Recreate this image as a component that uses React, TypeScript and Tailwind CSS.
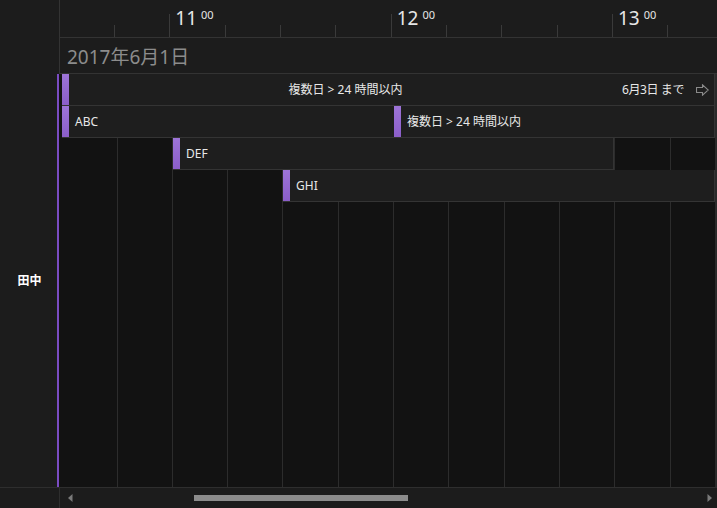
import React from "react";

type Ev = { label: string; left: string; width: string; top: string };

const hours: Record<number, string> = { 2: "11", 6: "12", 10: "13" };

function Strip() {
  return <div className="w-[7px] shrink-0 self-stretch bg-gradient-to-b from-[#9d74d8] to-[#8b5ec9]" />;
}

function ArrowOut() {
  return (
    <svg width="13" height="12" viewBox="0 0 13 12" className="shrink-0">
      <path d="M0.5 3.5H6.5V0.8L12.3 6L6.5 11.2V8.5H0.5Z" fill="none" stroke="#8a8a8a" strokeWidth="1.1" />
    </svg>
  );
}

export default function App() {
  const events: Ev[] = [
    { label: "ABC", left: "left-[1px]", width: "w-[333px]", top: "top-[32px]" },
    { label: "複数日 > 24 時間以内", left: "left-[333px]", width: "right-0", top: "top-[32px]" },
    { label: "DEF", left: "left-[112px]", width: "w-[441px]", top: "top-[64px]" },
    { label: "GHI", left: "left-[222px]", width: "right-0", top: "top-[96px]" },
  ];

  return (
    <div className="w-[717px] h-[508px] overflow-hidden bg-[#1c1c1c] text-[#e8e8e8] font-['Noto_Sans','Noto_Sans_CJK_JP',sans-serif] grid grid-cols-[59px_1fr] grid-rows-[74px_1fr_21px]">
      {/* header left blank */}
      <div className="bg-[#1c1c1c]" />

      {/* header right: time scale + date */}
      <div className="flex flex-col border-l border-[#333] overflow-hidden">
        <div className="h-[38px] flex border-b border-[#333] shrink-0">
          {Array.from({ length: 12 }).map((_, i) => (
            <div key={i} className={`${i === 0 ? "w-[55px]" : "w-[55.33px]"} shrink-0 flex`}>
              <div className="flex-1 pl-[5px] pt-[7px]">
                {hours[i] && (
                  <span className="flex items-start leading-none">
                    <span className="text-[19px] leading-[23px] text-[#e6e6e6]">{hours[i]}</span>
                    <span className="text-[11px] leading-none ml-[4px] mt-[2px] text-[#e6e6e6]">00</span>
                  </span>
                )}
              </div>
              <div
                className={`w-px self-end bg-[#3a3a3a] ${i === 1 || i === 5 || i === 9 ? "h-[23px]" : "h-[12px]"}`}
              />
            </div>
          ))}
        </div>
        <div className="h-[36px] flex items-center pl-[7px] pt-[3px] border-b border-[#333] shrink-0">
          <span className="text-[19px] text-[#8c8c8c] leading-none">2017年6月1日</span>
        </div>
      </div>

      {/* resource column */}
      <div className="flex items-center justify-center border-r-2 border-[#7a4cc2] bg-[#1c1c1c]">
        <span className="text-[12px] font-bold text-white pl-[2px]">田中</span>
      </div>

      {/* timeline canvas */}
      <div className="bg-[#121212] pl-[2px] border-r-2 border-[#2a2a2a] overflow-hidden">
        <div className="relative h-full">
          <div className="flex h-full">
            {Array.from({ length: 12 }).map((_, i) => (
              <div
                key={i}
                className={`${i === 0 ? "w-[56.5px]" : "w-[55.33px]"} shrink-0 h-full border-r border-[#2c2c2c]`}
              />
            ))}
          </div>

          {/* multi-day event */}
          <div className="absolute top-0 left-[1px] right-0 h-[32px] flex items-stretch bg-[#1e1e1e] border-b border-r border-[#343434]">
            <Strip />
            <div className="flex-1 flex items-center justify-center text-[12px]">複数日 &gt; 24 時間以内</div>
            <div className="flex items-center gap-[12px] pr-[5px] text-[12px] tracking-[-0.4px]">
              <span>6月3日 まで</span>
              <ArrowOut />
            </div>
          </div>

          {events.map((e) => (
            <div
              key={e.label}
              className={`absolute ${e.top} ${e.left} ${e.width} h-[32px] flex items-stretch bg-[#1e1e1e] border-b border-r border-[#343434]`}
            >
              <Strip />
              <div className="flex items-center pl-[6px] text-[12px]">{e.label}</div>
            </div>
          ))}
        </div>
      </div>

      {/* bottom left blank */}
      <div className="border-t border-[#2e2e2e]" />

      {/* horizontal scrollbar */}
      <div className="flex items-center border-t border-l border-[#2e2e2e] pl-[8px] pr-[5px]">
        <svg width="5" height="8" viewBox="0 0 5 8" className="shrink-0">
          <path d="M4.5 0V8L0 4Z" fill="#7a7a7a" />
        </svg>
        <div className="flex-1 flex items-center pl-[121px] pr-[299px]">
          <div className="h-[6px] w-full bg-[#8c8c8c]" />
        </div>
        <svg width="5" height="8" viewBox="0 0 5 8" className="shrink-0">
          <path d="M0.5 0V8L5 4Z" fill="#7a7a7a" />
        </svg>
      </div>
    </div>
  );
}
